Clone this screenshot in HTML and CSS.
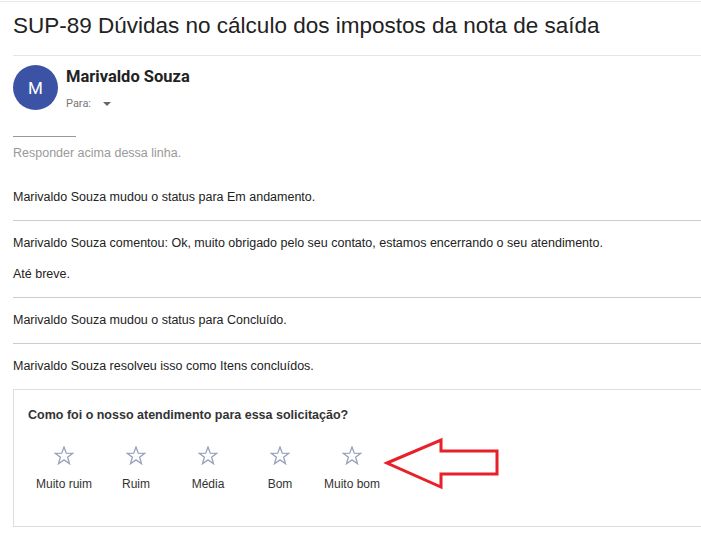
FILE: index.html
```html
<!DOCTYPE html>
<html lang="pt-BR">
<head>
    <meta charset="UTF-8">
    <meta name="viewport" content="width=device-width, initial-scale=1.0">
    <title>SUP-89 Dúvidas no cálculo dos impostos da nota de saída</title>
    <link rel="stylesheet" href="styles.css">
</head>
<body>
    <div class="page">
        <h1 class="subject">SUP-89 Dúvidas no cálculo dos impostos da nota de saída</h1>

        <div class="sender">
            <div class="avatar">M</div>
            <div class="sender-info">
                <div class="sender-name">Marivaldo Souza</div>
                <div class="sender-to">Para: <span class="caret"></span></div>
            </div>
        </div>

        <div class="reply-line"></div>
        <p class="reply-hint">Responder acima dessa linha.</p>

        <div class="entry">
            <p>Marivaldo Souza mudou o status para Em andamento.</p>
        </div>
        <div class="entry">
            <p>Marivaldo Souza comentou: Ok, muito obrigado pelo seu contato, estamos encerrando o seu atendimento.</p>
            <p>Até breve.</p>
        </div>
        <div class="entry">
            <p>Marivaldo Souza mudou o status para Concluído.</p>
        </div>
        <div class="entry last">
            <p>Marivaldo Souza resolveu isso como Itens concluídos.</p>
        </div>

        <div class="survey">
            <h3>Como foi o nosso atendimento para essa solicitação?</h3>
            <div class="rating">
                <div class="rate">
                    <svg class="star" viewBox="0 0 20 19"><polygon points="10,1 12.2,7.2 18.8,7.3 13.6,11.3 15.5,17.7 10,13.9 4.5,17.7 6.4,11.3 1.2,7.3 7.8,7.2"/></svg>
                    <span>Muito ruim</span>
                </div>
                <div class="rate">
                    <svg class="star" viewBox="0 0 20 19"><polygon points="10,1 12.2,7.2 18.8,7.3 13.6,11.3 15.5,17.7 10,13.9 4.5,17.7 6.4,11.3 1.2,7.3 7.8,7.2"/></svg>
                    <span>Ruim</span>
                </div>
                <div class="rate">
                    <svg class="star" viewBox="0 0 20 19"><polygon points="10,1 12.2,7.2 18.8,7.3 13.6,11.3 15.5,17.7 10,13.9 4.5,17.7 6.4,11.3 1.2,7.3 7.8,7.2"/></svg>
                    <span>Média</span>
                </div>
                <div class="rate">
                    <svg class="star" viewBox="0 0 20 19"><polygon points="10,1 12.2,7.2 18.8,7.3 13.6,11.3 15.5,17.7 10,13.9 4.5,17.7 6.4,11.3 1.2,7.3 7.8,7.2"/></svg>
                    <span>Bom</span>
                </div>
                <div class="rate">
                    <svg class="star" viewBox="0 0 20 19"><polygon points="10,1 12.2,7.2 18.8,7.3 13.6,11.3 15.5,17.7 10,13.9 4.5,17.7 6.4,11.3 1.2,7.3 7.8,7.2"/></svg>
                    <span>Muito bom</span>
                </div>
            </div>
            <!-- red arrow drawn over the mail -->
            <svg class="arrow" width="132" height="56" viewBox="0 0 132 56">
                <polygon points="17,28 71,5 71,16 127,16 127,39 71,39 71,52"/>
            </svg>
        </div>
    </div>
</body>
</html>
```

FILE: styles.css
```css
html, body {
    overflow: hidden;
}

body {
    margin: 0;
    padding: 0;
    background: #fff;
    font-family: "Liberation Sans", Arial, sans-serif;
    color: #222;
}

.page {
    margin-top: 1px;
    border-top: 1px solid #e8e8e8;
}

.subject {
    margin: 0 0 0 13px;
    padding: 10px 0 15px;
    font-size: 22.5px;
    line-height: 28px;
    font-weight: normal;
    color: #222;
    border-bottom: 1px solid #e5e5e5;
    white-space: nowrap;
}

.sender {
    display: flex;
    align-items: flex-start;
    gap: 8px;
    padding: 9px 0 0 13px;
}

.avatar {
    width: 45px;
    height: 45px;
    border-radius: 50%;
    background: #3b52a5;
    color: #fff;
    font-family: Roboto, sans-serif;
    font-size: 17px;
    display: flex;
    align-items: center;
    justify-content: center;
}

.sender-info {
    padding-top: 2px;
    font-family: Roboto, sans-serif;
}

.sender-name {
    font-size: 16.5px;
    line-height: 20px;
    font-weight: bold;
    color: #222;
}

.sender-to {
    margin-top: 10px;
    font-size: 11px;
    line-height: 14px;
    color: #777;
    display: flex;
    align-items: center;
    gap: 12px;
}

.caret {
    width: 0;
    height: 0;
    border-left: 4px solid transparent;
    border-right: 4px solid transparent;
    border-top: 4px solid #666;
}

.reply-line {
    width: 63px;
    margin: 25px 0 0 13px;
    border-top: 1px solid #999;
}

.reply-hint {
    margin: 7px 0 13px 13px;
    font-size: 12.5px;
    line-height: 18px;
    color: #999;
}

.entry {
    margin-left: 13px;
    padding: 13px 0 14px;
    border-bottom: 1px solid #ccc;
}

.entry.last {
    border-bottom: none;
}

.entry p {
    margin: 0;
    font-size: 12.5px;
    line-height: 18px;
    color: #222;
    white-space: nowrap;
}

.entry p + p {
    margin-top: 13px;
}

.survey {
    position: relative;
    margin: 0 -20px 0 13px;
    padding: 16px 14px 33px;
    border: 1px solid #ddd;
}

.survey h3 {
    margin: 0;
    font-size: 12.5px;
    line-height: 18px;
    font-weight: bold;
    color: #333;
}

.rating {
    display: flex;
    margin-top: 22px;
}

.rate {
    width: 72px;
    display: flex;
    flex-direction: column;
    align-items: center;
    gap: 10px;
}

.star {
    width: 20px;
    height: 19px;
    fill: none;
    stroke: #9aa2bc;
    stroke-width: 1.3;
    stroke-linejoin: miter;
}

.rate span {
    font-size: 12px;
    line-height: 18px;
    color: #333;
    white-space: nowrap;
}

.arrow {
    position: absolute;
    left: 356px;
    top: 45px;
    fill: none;
    stroke: #e8202a;
    stroke-width: 3;
}
```
